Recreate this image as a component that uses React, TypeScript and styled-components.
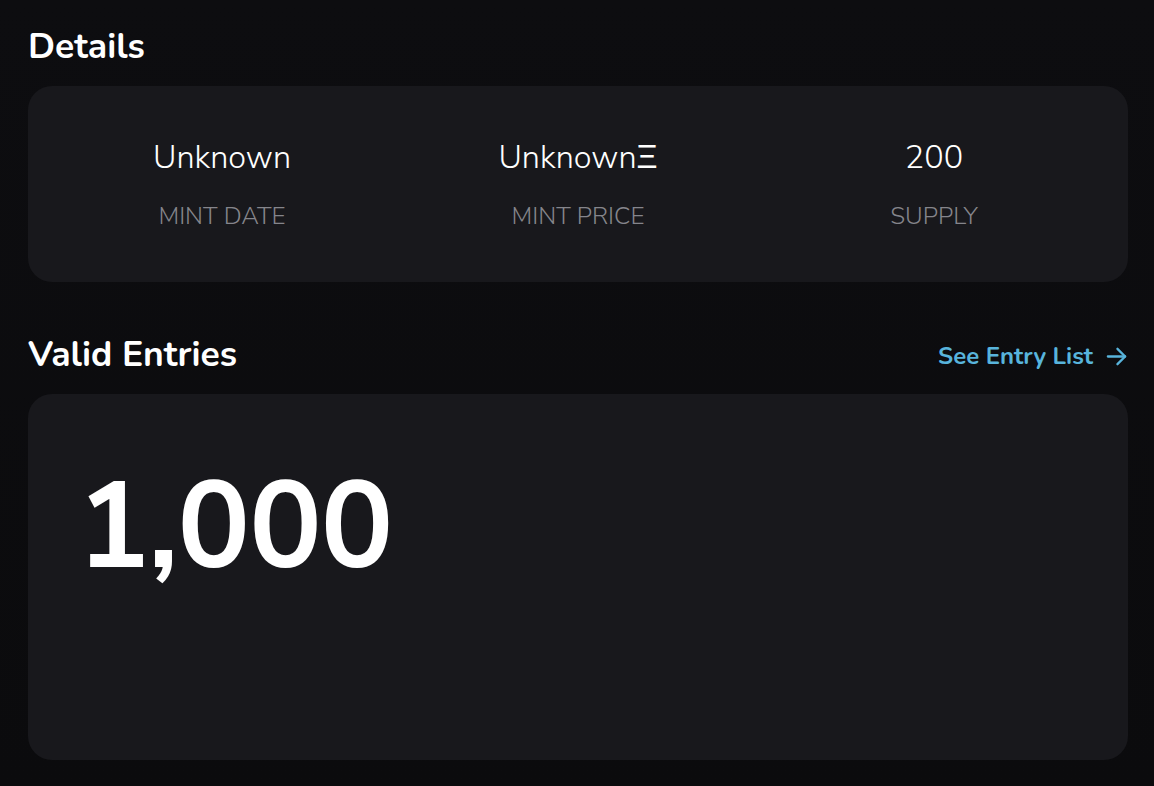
import React from "react";
import styled, { createGlobalStyle } from "styled-components";

const Global = createGlobalStyle`
  html, body { margin: 0; padding: 0; background: #0b0b0d; }
  body { font-family: "Nunito", "Lato", "Noto Sans", sans-serif; color: #fff; }
  * { box-sizing: border-box; }
`;

const Page = styled.div`
  width: 1154px;
  min-height: 786px;
  padding: 22px 26px 0 28px;
  background: linear-gradient(180deg, #0d0d10 0%, #0b0b0d 100%);
  display: flex;
  flex-direction: column;
`;

const SectionHeader = styled.div`
  display: flex;
  align-items: center;
  justify-content: space-between;
  height: 48px;
  margin-bottom: 16px;
`;

const Title = styled.h2`
  margin: 0;
  font-size: 35.5px;
  font-weight: 700;
  color: #ffffff;
`;

const Card = styled.div<{ $h: number }>`
  background: #18181c;
  border-radius: 24px;
  height: ${(p) => p.$h}px;
`;

const StatsRow = styled.div`
  display: grid;
  grid-template-columns: repeat(3, 1fr);
  padding: 52px 16px 0;
`;

const Stat = styled.div`
  display: flex;
  flex-direction: column;
  align-items: center;
  gap: 25px;
`;

const Value = styled.div`
  font-family: "Nunito Sans", "Nunito", sans-serif;
  font-size: 32.4px;
  font-weight: 300;
  line-height: 38px;
  color: #ffffff;
`;

const Label = styled.div`
  font-family: "Nunito Sans", "Nunito", sans-serif;
  font-size: 24.4px;
  font-weight: 300;
  line-height: 30px;
  color: #85858b;
  text-transform: uppercase;
`;

const Spacer = styled.div`
  height: 48px;
`;

const Link = styled.a`
  display: flex;
  align-items: center;
  gap: 12px;
  color: #58b4dc;
  font-size: 24px;
  font-weight: 700;
  text-decoration: none;
  padding-top: 4px;
`;

const BigNumber = styled.div`
  font-family: "Nunito Sans", "Nunito", sans-serif;
  font-size: 121px;
  font-weight: 700;
  line-height: 1;
  color: #ffffff;
  padding: 73px 0 0 49px;
  letter-spacing: -1px;
`;

export default function App() {
  return (
    <>
      <Global />
      <Page>
        <SectionHeader>
          <Title>Details</Title>
        </SectionHeader>
        <Card $h={196}>
          <StatsRow>
            <Stat>
              <Value>Unknown</Value>
              <Label>Mint Date</Label>
            </Stat>
            <Stat>
              <Value>UnknownΞ</Value>
              <Label>Mint Price</Label>
            </Stat>
            <Stat>
              <Value>200</Value>
              <Label>Supply</Label>
            </Stat>
          </StatsRow>
        </Card>
        <Spacer />
        <SectionHeader>
          <Title>Valid Entries</Title>
          <Link href="#">
            See Entry List
            <svg width="23" height="23" viewBox="0 0 24 24" fill="none" stroke="currentColor" strokeWidth="2.4" strokeLinecap="round" strokeLinejoin="round">
              <path d="M3 12h18" />
              <path d="M13 4l8 8-8 8" />
            </svg>
          </Link>
        </SectionHeader>
        <Card $h={366}>
          <BigNumber>1,000</BigNumber>
        </Card>
      </Page>
    </>
  );
}
